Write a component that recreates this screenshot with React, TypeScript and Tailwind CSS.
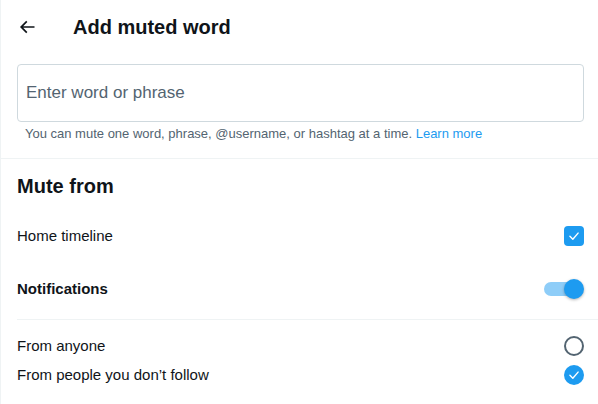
import React, { FC, useState } from 'react'

const font = { fontFamily: '"Liberation Sans", Arial, sans-serif' }

const CheckIcon: FC = () => (
  <svg viewBox="0 0 24 24" className="h-[14px] w-[14px]" fill="none" stroke="white" strokeWidth={2.4} strokeLinecap="round" strokeLinejoin="round">
    <polyline points="5 12.5 10 17.5 19 7" />
  </svg>
)

const App: FC = () => {
  const [word, setWord] = useState<string>('')
  const [home, setHome] = useState<boolean>(true)
  const [notif, setNotif] = useState<boolean>(true)
  const [from, setFrom] = useState<'anyone' | 'notfollow'>('notfollow')

  return (
    <div className="h-[404px] w-[598px] overflow-hidden border-l border-[#eff3f4] bg-white text-[#0f1419]" style={font}>
      <div className="flex h-[53px] items-center pl-[8px] pr-[14px]">
        <button className="flex h-9 w-9 items-center justify-center rounded-full">
          <svg viewBox="0 0 24 24" className="h-5 w-5" fill="#0f1419">
            <path d="M7.414 13l5.043 5.04-1.414 1.42L3.586 12l7.457-7.46 1.414 1.42L7.414 11H21v2H7.414z" />
          </svg>
        </button>
        <h1 className="ml-[28px] text-[20px] font-bold leading-6">Add muted word</h1>
      </div>

      <div className="pl-4 pr-[14px] pt-[11px]">
        <input
          value={word}
          onChange={e => setWord(e.target.value)}
          placeholder="Enter word or phrase"
          className="h-[58px] w-full rounded-[4px] border border-[#cfd9de] px-2 text-[17px] text-[#0f1419] outline-none placeholder:text-[#536471]"
          style={font}
        />
        <p className="mt-[4px] px-2 text-[13px] leading-4 text-[#536471]">
          You can mute one word, phrase, @username, or hashtag at a time. <span className="text-[#1d9bf0]">Learn more</span>
        </p>
      </div>

      <div className="mt-[16px] border-t border-[#eff3f4]" />

      <div className="pl-4 pr-[14px]">
        <h2 className="pt-[15px] text-[20px] font-bold leading-6">Mute from</h2>

        <div className="mt-[14px] flex h-[48px] items-center justify-between">
          <span className="text-[15px]">Home timeline</span>
          <button
            onClick={() => setHome(!home)}
            className={`flex h-5 w-5 items-center justify-center rounded-[4px] ${home ? 'bg-[#1d9bf0]' : 'border-2 border-[#536471]'}`}
          >
            {home && <CheckIcon />}
          </button>
        </div>

        <div className="mt-[3px] flex h-[52px] items-center justify-between">
          <span className="text-[15px] font-bold">Notifications</span>
          <button onClick={() => setNotif(!notif)} className="relative h-5 w-10">
            <span className={`absolute left-0 top-[3px] h-[14px] w-[34px] rounded-full ${notif ? 'bg-[#8ecdf8]' : 'bg-[#cfd9de]'}`} />
            <span
              className={`absolute top-0 h-5 w-5 rounded-full shadow-[0_1px_3px_rgba(0,0,0,0.3)] ${notif ? 'left-5 bg-[#1d9bf0]' : 'left-0 bg-white'}`}
            />
          </button>
        </div>

        <div className="mt-[4px] -mr-[14px] border-t border-[#eff3f4]" />

        <div className="mt-[12px] flex h-[28px] items-center justify-between">
          <span className="text-[15px]">From anyone</span>
          <button
            onClick={() => setFrom('anyone')}
            className={`flex h-5 w-5 items-center justify-center rounded-full ${from === 'anyone' ? 'bg-[#1d9bf0]' : 'border-2 border-[#536471]'}`}
          >
            {from === 'anyone' && <CheckIcon />}
          </button>
        </div>
        <div className="mt-px flex h-[28px] items-center justify-between">
          <span className="text-[15px]">From people you don’t follow</span>
          <button
            onClick={() => setFrom('notfollow')}
            className={`flex h-5 w-5 items-center justify-center rounded-full ${from === 'notfollow' ? 'bg-[#1d9bf0]' : 'border-2 border-[#536471]'}`}
          >
            {from === 'notfollow' && <CheckIcon />}
          </button>
        </div>
      </div>
    </div>
  )
}

export default App
